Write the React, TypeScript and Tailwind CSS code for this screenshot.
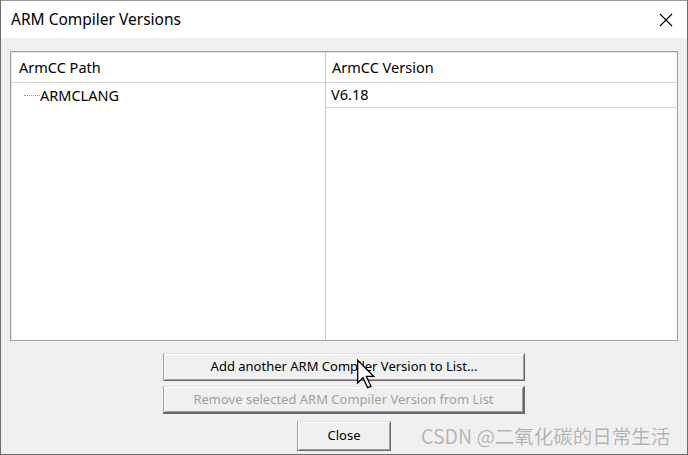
import React from "react";

const font = "font-['Segoe_UI','Noto_Sans','Open_Sans',sans-serif]";

const Cursor = () => (
  <svg className="absolute left-[355px] top-[359px]" width="22" height="32" viewBox="0 0 16 24">
    <path d="M1 1 L1 18 L5 14 L8.5 21.5 L11 20.5 L7.5 13 L13 13 Z" fill="#fff" stroke="#000" strokeWidth="1" strokeLinejoin="miter" />
  </svg>
);

const Button = ({ children, disabled, className = "" }: { children: React.ReactNode; disabled?: boolean; className?: string }) => (
  <div
    className={`flex items-center justify-center bg-[#f0f0f0] border border-t-[#e3e3e3] border-l-[#a0a0a0] border-r-[#696969] border-b-[#696969] shadow-[inset_1px_1px_0_#ffffff,inset_-1px_-1px_0_#a0a0a0] text-[13px] ${
      disabled ? "text-[#a0a0a0]" : "text-black"
    } ${className}`}
  >
    {children}
  </div>
);

export default function App() {
  return (
    <div className={`relative w-[688px] h-[455px] bg-[#f0f0f0] border-x border-b border-[#6b6b6b] overflow-hidden ${font}`}>
      {/* title bar */}
      <div className="h-[38px] bg-white flex items-center justify-between pl-[10px] pr-[14px] border-t border-[#9a9a9a]">
        <span className="text-[15.5px] text-black">ARM Compiler Versions</span>
        <svg width="14" height="14" viewBox="0 0 14 14">
          <path d="M1 1 L13 13 M13 1 L1 13" stroke="#000" strokeWidth="1.1" />
        </svg>
      </div>

      <div className="flex flex-col items-center pt-[13px]">
        {/* list view */}
        <div className="w-[668px] h-[290px] bg-white border border-[#a0a0a0] shadow-[inset_1px_1px_0_#e3e3e3] flex text-[14.5px] text-black">
          <div className="w-[315px] flex flex-col border-r border-[#c8c8c8]">
            <div className="h-[31px] flex items-center pl-[8px] pt-[2px] border-b border-[#d5d5d5]">ArmCC Path</div>
            <div className="h-[25px] flex items-center pl-[13px]">
              <span className="w-[16px] border-t border-dotted border-[#9a9a9a]" />
              <span>ARMCLANG</span>
            </div>
          </div>
          <div className="flex-1 flex flex-col">
            <div className="h-[31px] flex items-center pl-[6px] pt-[2px] border-b border-[#d5d5d5]">ArmCC Version</div>
            <div className="h-[25px] flex items-center pl-[5px] border-b border-[#d5d5d5]">V6.18</div>
          </div>
        </div>

        <Button className="w-[362px] h-[28px] mt-[12px]">Add another ARM Compiler Version to List...</Button>
        <Button disabled className="w-[362px] h-[28px] mt-[5px] border-r-2 border-b-2">
          Remove selected ARM Compiler Version from List
        </Button>
        <Button className="w-[94px] h-[30px] mt-[7px]">Close</Button>
      </div>

      <div className="absolute left-[420px] top-[421px] text-[19.5px] leading-[30px] text-[#b4b4b4] font-['Noto_Sans_CJK_SC',sans-serif] [text-shadow:0_0_1px_#ffffff]">
        CSDN @二氧化碳的日常生活
      </div>

      <Cursor />
    </div>
  );
}
